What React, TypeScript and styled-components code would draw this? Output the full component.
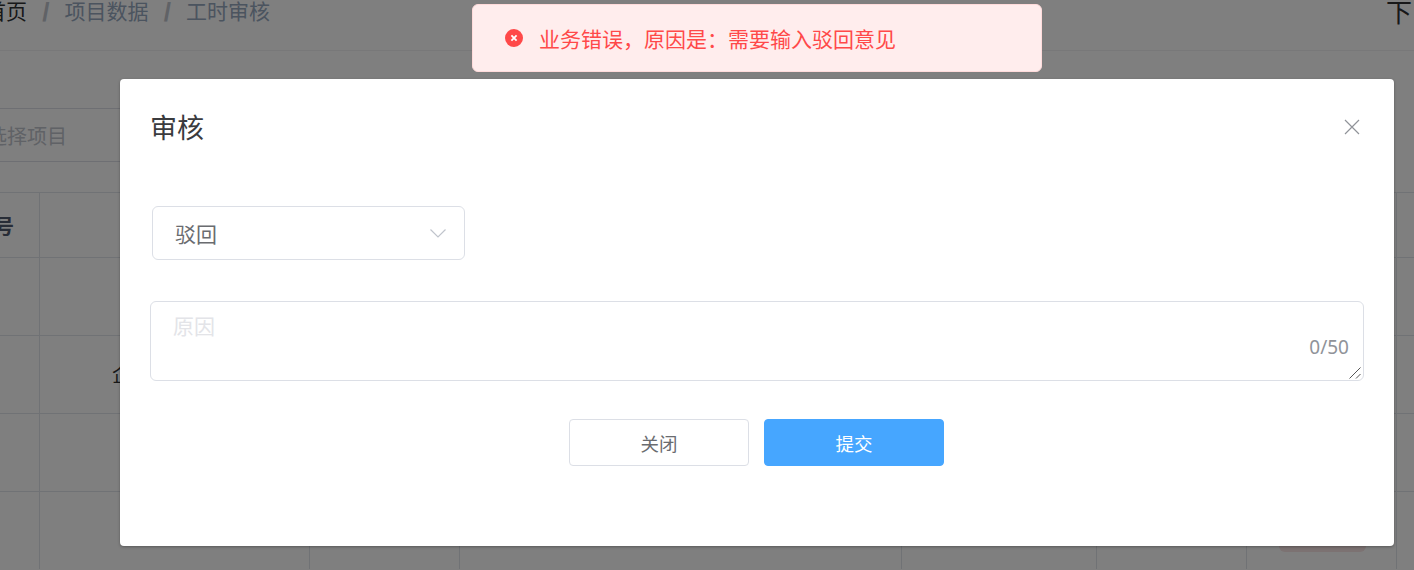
import React from "react";
import styled, { createGlobalStyle } from "styled-components";

const GlobalStyle = createGlobalStyle`
  html, body {
    margin: 0;
    padding: 0;
    width: 1414px;
    height: 570px;
    overflow: hidden;
    background: #fff;
    font-family: "Liberation Sans", "Noto Sans CJK SC", sans-serif;
  }
  * {
    box-sizing: border-box;
  }
`;

const COLUMNS = [40, 270, 150, 442, 195, 150, 150, 60];
const ROWS = ["", "企", "", ""];

/* ---------------------------------------- */
/* Page behind the mask */
/* ---------------------------------------- */
const PageStyled = styled.div`
  width: 1414px;
  height: 570px;
  overflow: hidden;
  position: relative;
  background: #fff;
`;

const HeaderStyled = styled.header`
  height: 51px;
  display: flex;
  justify-content: space-between;
  border-bottom: 1px solid #f0f1f3;
  margin-left: -15px;
  overflow: hidden;
`;

const BreadcrumbStyled = styled.nav`
  display: flex;
  font-size: 21px;
  line-height: 24px;
  color: #97a8be;
`;

const CrumbHomeStyled = styled.span`
  color: #303133;
`;

const CrumbSepStyled = styled.span`
  width: 37.5px;
  text-align: center;
  font-size: 26px;
  font-weight: 700;
  color: #c0c4cc;
`;

const UserNameStyled = styled.span`
  font-size: 26px;
  line-height: 26px;
  margin-right: 2px;
  color: #303133;
`;

const ToolbarStyled = styled.div`
  height: 141px;
  padding-top: 57px;
`;

const SearchInputStyled = styled.div`
  height: 54px;
  margin-left: -41px;
  padding-left: 7px;
  width: 400px;
  display: flex;
  align-items: center;
  font-size: 20px;
  color: #c0c4cc;
  border: 1px solid #dcdfe6;
`;

const TableRowStyled = styled.div<{ $height: number }>`
  display: flex;
  height: ${(props) => props.$height}px;
  border-top: 1px solid #e1e4ea;
`;

const TableCellStyled = styled.div<{ $width: number }>`
  flex: 0 0 ${(props) => props.$width}px;
  min-width: 0;
  display: flex;
  align-items: center;
  border-right: 1px solid #e1e4ea;
  font-size: 20px;
  color: #303133;
`;

const HeadCellStyled = styled(TableCellStyled)`
  justify-content: flex-end;
  font-weight: 700;
  color: #515a6e;
  padding-right: 25px;
  white-space: nowrap;
`;

const ProjectNameStyled = styled.span`
  margin-left: 72px;
  margin-top: -2px;
`;

const RedActionStyled = styled.div`
  width: 87px;
  height: 43px;
  align-self: flex-start;
  margin: 17px 30px 0 auto;
  border-radius: 6px;
  background: #f9e4e4;
`;

/* ---------------------------------------- */
/* Mask and dialog */
/* ---------------------------------------- */
const MaskStyled = styled.div`
  position: absolute;
  inset: 0;
  background: rgba(0, 0, 0, 0.5);
`;

const DialogStyled = styled.section`
  position: absolute;
  left: 120px;
  top: 79px;
  width: 1274px;
  height: 467px;
  padding: 30px 30px 0;
  background: #fff;
  border-radius: 4px;
  box-shadow: 0 1px 3px rgba(0, 0, 0, 0.3);
  display: flex;
  flex-direction: column;
`;

const DialogHeadStyled = styled.div`
  display: flex;
  align-items: center;
  justify-content: space-between;
  height: 40px;
`;

const DialogTitleStyled = styled.h2`
  margin: 0;
  font-size: 27px;
  font-weight: 400;
  line-height: 40px;
  color: #3a3b3e;
`;

const CloseButtonStyled = styled.button`
  display: flex;
  padding: 0;
  margin: -4px 4px 0 0;
  border: 0;
  background: none;
  color: #909399;
`;

const SelectStyled = styled.div`
  width: 313px;
  height: 54px;
  margin: 57px 0 0 2px;
  padding: 0 18px 0 22px;
  display: flex;
  align-items: center;
  justify-content: space-between;
  border: 1px solid #dcdfe6;
  border-radius: 6px;
  font-size: 21px;
  color: #6a6c70;
`;

const ReasonFieldStyled = styled.div`
  position: relative;
  margin-top: 41px;
  height: 80px;
`;

const ReasonInputStyled = styled.textarea`
  display: block;
  width: 100%;
  height: 100%;
  padding: 10px 22px;
  border: 1px solid #dcdfe6;
  border-radius: 6px;
  outline: none;
  resize: none;
  font-family: inherit;
  font-size: 21px;
  line-height: 30px;
  color: #606266;
  &::placeholder {
    color: #e3e4e8;
  }
`;

const CounterStyled = styled.span`
  position: absolute;
  right: 15px;
  bottom: 22px;
  font-family: "Noto Sans", sans-serif;
  font-size: 19px;
  line-height: 24px;
  color: #909399;
`;

const ResizeHandleStyled = styled.svg`
  position: absolute;
  right: 3px;
  bottom: 2px;
`;

const DialogFooterStyled = styled.div`
  display: flex;
  justify-content: center;
  gap: 15px;
  margin-top: 38px;
  padding-right: 1px;
`;

const ButtonStyled = styled.button<{ $primary?: boolean }>`
  width: 180px;
  height: 47px;
  padding: 0;
  border-radius: 4px;
  font-family: inherit;
  font-size: 18.5px;
  border: 1px solid ${(props) => (props.$primary ? "#46a6ff" : "#dcdfe6")};
  background: ${(props) => (props.$primary ? "#46a6ff" : "#fff")};
  color: ${(props) => (props.$primary ? "#fff" : "#6a6c70")};
`;

/* ---------------------------------------- */
/* Toast */
/* ---------------------------------------- */
const ToastStyled = styled.div`
  position: absolute;
  left: 472px;
  top: 4px;
  width: 570px;
  height: 68px;
  padding: 0 0 0 32px;
  display: flex;
  align-items: center;
  gap: 16px;
  background: #ffeded;
  border: 1px solid #ffdbdb;
  border-radius: 6px;
  font-size: 21px;
  color: #ff4949;
`;

const ErrorIcon = () => (
  <svg width="18" height="18" viewBox="0 0 18 18">
    <circle cx="9" cy="9" r="9" fill="#ff4949" />
    <path d="M6.4 6.4l5.2 5.2M11.6 6.4l-5.2 5.2" stroke="#fff" strokeWidth="1.8" />
  </svg>
);

const CloseIcon = () => (
  <svg width="16" height="16" viewBox="0 0 16 16" fill="none" stroke="currentColor" strokeWidth="1.2">
    <path d="M1 1l14 14M15 1L1 15" />
  </svg>
);

const ChevronIcon = () => (
  <svg width="16" height="9" viewBox="0 0 16 9" fill="none" stroke="#c0c4cc" strokeWidth="1.2">
    <path d="M0.5 0.5L8 8l7.5-7.5" />
  </svg>
);

export default function App() {
  return (
    <PageStyled>
      <GlobalStyle />
      <HeaderStyled>
        <BreadcrumbStyled>
          <CrumbHomeStyled>首页</CrumbHomeStyled>
          <CrumbSepStyled>/</CrumbSepStyled>
          <span>项目数据</span>
          <CrumbSepStyled>/</CrumbSepStyled>
          <span>工时审核</span>
        </BreadcrumbStyled>
        <UserNameStyled>下</UserNameStyled>
      </HeaderStyled>
      <ToolbarStyled>
        <SearchInputStyled>请选择项目</SearchInputStyled>
      </ToolbarStyled>
      <TableRowStyled $height={65}>
        {COLUMNS.map((width, index) => (
          <HeadCellStyled key={index} $width={width}>
            {index === 0 ? "序号" : ""}
          </HeadCellStyled>
        ))}
      </TableRowStyled>
      {ROWS.map((label, rowIndex) => (
        <TableRowStyled key={rowIndex} $height={78}>
          {COLUMNS.map((width, index) => (
            <TableCellStyled key={index} $width={width}>
              {index === 1 && label ? <ProjectNameStyled>{label}</ProjectNameStyled> : null}
              {index === 6 && rowIndex === 3 ? <RedActionStyled /> : null}
            </TableCellStyled>
          ))}
        </TableRowStyled>
      ))}
      <MaskStyled />
      <DialogStyled>
        <DialogHeadStyled>
          <DialogTitleStyled>审核</DialogTitleStyled>
          <CloseButtonStyled>
            <CloseIcon />
          </CloseButtonStyled>
        </DialogHeadStyled>
        <SelectStyled>
          驳回
          <ChevronIcon />
        </SelectStyled>
        <ReasonFieldStyled>
          <ReasonInputStyled placeholder="原因" />
          <CounterStyled>0/50</CounterStyled>
          <ResizeHandleStyled width="12" height="12" viewBox="0 0 12 12" fill="none" stroke="#555" strokeWidth="1">
            <path d="M0.5 11.5L11.5 0.5M7 11.5l4.5-4.5" />
          </ResizeHandleStyled>
        </ReasonFieldStyled>
        <DialogFooterStyled>
          <ButtonStyled>关闭</ButtonStyled>
          <ButtonStyled $primary>提交</ButtonStyled>
        </DialogFooterStyled>
      </DialogStyled>
      <ToastStyled>
        <ErrorIcon />
        业务错误，原因是：需要输入驳回意见
      </ToastStyled>
    </PageStyled>
  );
}
